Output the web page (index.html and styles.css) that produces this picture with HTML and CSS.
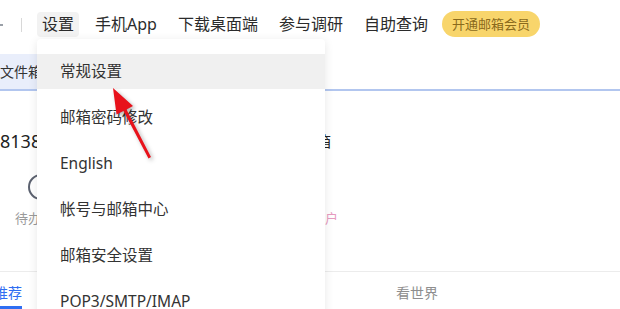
FILE: index.html
```html
<!DOCTYPE html>
<html lang="zh-CN">
<head>
<meta charset="utf-8">
<title>邮箱设置</title>
<link rel="stylesheet" href="styles.css">
</head>
<body>
<div class="page">
  <header class="topbar">
    <span class="chev"></span>
    <span class="divider"></span>
    <nav class="nav">
      <span class="nav-item active">设置</span>
      <span class="nav-item">手机App</span>
      <span class="nav-item">下载桌面端</span>
      <span class="nav-item">参与调研</span>
      <span class="nav-item">自助查询</span>
      <span class="vip">开通邮箱会员</span>
    </nav>
  </header>

  <div class="tabbar">
    <span class="tab-sel">文件箱</span>
  </div>

  <section class="account">
    <div class="acct-line">
      <span class="acct-name">8138</span>
      <span class="acct-tail">邮箱</span>
    </div>
    <div class="quick">
      <div class="q-item">
        <span class="ring"></span>
        <span class="q-label">待办事项</span>
      </div>
      <div class="q-item q-right">
        <span class="q-label pink">客户</span>
      </div>
    </div>
  </section>

  <div class="feed-tabs">
    <span class="feed-tab on">推荐</span>
    <span class="feed-tab">看世界</span>
  </div>

  <ul class="menu">
    <li class="menu-item hover">常规设置</li>
    <li class="menu-item">邮箱密码修改</li>
    <li class="menu-item">English</li>
    <li class="menu-item">帐号与邮箱中心</li>
    <li class="menu-item">邮箱安全设置</li>
    <li class="menu-item">POP3/SMTP/IMAP</li>
  </ul>

  <svg class="arrow" width="620" height="309" viewBox="0 0 620 309">
    <polygon points="113,88 133,106 126.5,109.5 151,157 148.5,158.5 123.5,111 116.5,114.5" fill="#e8121b"/>
  </svg>
</div>
</body>
</html>
```

FILE: styles.css
```css
* { box-sizing: border-box; }
html, body { margin: 0; padding: 0; }
body {
  width: 620px;
  height: 309px;
  overflow: hidden;
  background: #fff;
  font-family: "Noto Sans", "Noto Sans CJK SC", sans-serif;
  color: #333;
}
.page {
  position: relative;
  width: 620px;
  height: 309px;
  overflow: hidden;
}

/* top bar */
.topbar {
  height: 48px;
  display: flex;
  align-items: center;
}
.chev {
  width: 3px;
  height: 2px;
  background: #9aa0a8;
  margin-top: 2px;
}
.divider {
  width: 1px;
  height: 14px;
  background: #d8d8d8;
  margin-left: 18px;
  margin-right: 15px;
  margin-top: 2px;
}
.nav {
  display: flex;
  align-items: center;
  gap: 11px;
}
.nav-item {
  font-size: 16px;
  line-height: 25px;
  padding: 0 5px;
  border-radius: 4px;
  color: #2b2b2b;
  white-space: nowrap;
}
.nav-item.active { background: #f2f2f2; }
.vip {
  margin-left: -2px;
  height: 26px;
  line-height: 26px;
  padding: 0 10px;
  border-radius: 13px;
  background: #f8d56b;
  color: #8a6a1c;
  font-size: 13px;
  white-space: nowrap;
}

/* background tab bar */
.tabbar {
  margin-top: 6px;
  height: 37px;
  border-bottom: 2px solid #b2c6ef;
  display: flex;
}
.tab-sel {
  width: 60px;
  height: 35px;
  line-height: 35px;
  background: #e9eefb;
  font-size: 14px;
  color: #333;
}

/* account summary */
.account {
  padding-top: 38px;
}
.acct-line {
  width: 331px;
  display: flex;
  justify-content: space-between;
  font-size: 18px;
  line-height: 24px;
  color: #222;
}
.acct-tail { font-size: 15px; }
.quick {
  width: 345px;
  margin-top: 21px;
  display: flex;
  justify-content: space-between;
  align-items: flex-end;
}
.q-item {
  width: 70px;
  margin-left: 6px;
  display: flex;
  flex-direction: column;
  align-items: center;
}
.q-right { width: 40px; margin-left: 0; }
.ring {
  width: 26px;
  height: 26px;
  border-radius: 50%;
  border: 2.5px solid #5c6270;
}
.q-label {
  margin-top: 9px;
  font-size: 13px;
  line-height: 18px;
  color: #9a9a9a;
  white-space: nowrap;
}
.q-label.pink { color: #e79bc0; }

/* feed tabs */
.feed-tabs {
  position: absolute;
  left: 0;
  right: 0;
  top: 271px;
  height: 38px;
  border-top: 1px solid #ececec;
  display: flex;
}
.feed-tab {
  font-size: 14px;
  line-height: 20px;
  margin-top: 11px;
  color: #8e8e8e;
}
.feed-tab.on {
  margin-left: -6px;
  width: 28px;
  color: #2f6ef2;
  height: 26px;
  border-bottom: 3px solid #2f6ef2;
}
.feed-tab + .feed-tab { margin-left: 374px; }

/* dropdown menu */
.menu {
  position: absolute;
  left: 37px;
  top: 39px;
  width: 288px;
  height: 290px;
  margin: 0;
  padding: 15px 0 0;
  list-style: none;
  background: #fff;
  border-radius: 4px;
  box-shadow: 0 2px 10px rgba(0, 0, 0, 0.1);
  display: flex;
  flex-direction: column;
  gap: 11px;
}
.menu-item {
  height: 35px;
  line-height: 35px;
  padding-left: 23px;
  font-size: 15.5px;
  color: #333;
  white-space: nowrap;
}
.menu-item.hover { background: #f0f0f0; }

/* annotation arrow */
.arrow {
  position: absolute;
  left: 0;
  top: 0;
  filter: drop-shadow(2px 2px 2px rgba(0, 0, 0, 0.3));
}
```
